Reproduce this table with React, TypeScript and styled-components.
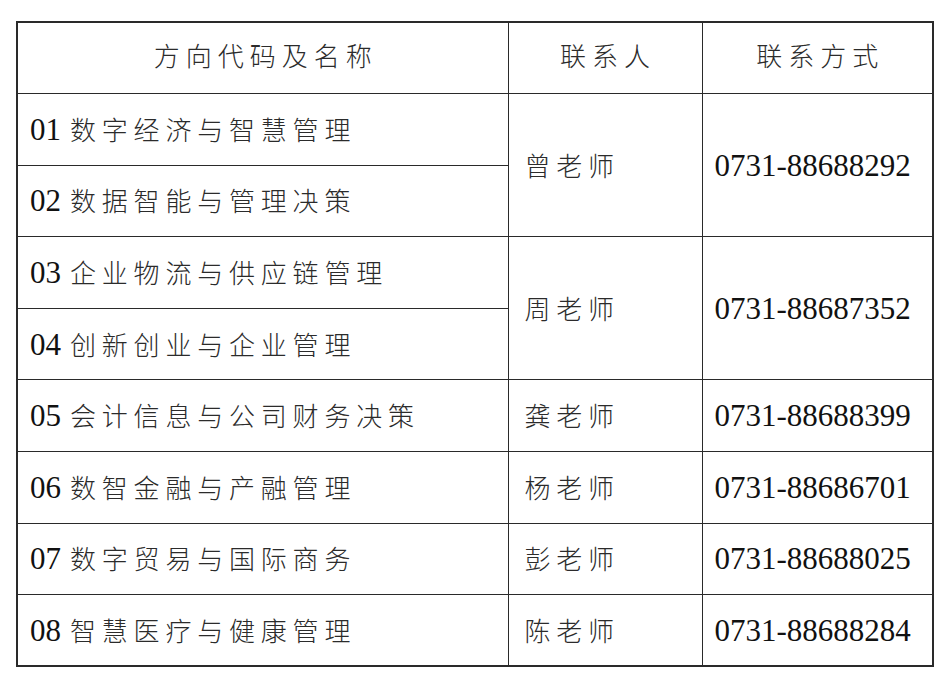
import React from "react";
import styled, { createGlobalStyle } from "styled-components";

const Global = createGlobalStyle`
  html, body { margin: 0; padding: 0; background: #fff; }
  body { font-family: "Liberation Serif", "Noto Sans CJK SC", serif; color: #1e1e1e; }
`;

const Page = styled.div`
  padding: 21px 0 0 16px;
`;

const Table = styled.table`
  border-collapse: collapse;
  table-layout: fixed;
  width: 916px;
  border: 2px solid #2a2a2a;
`;

const Col = styled.col<{ $w: number }>`
  width: ${(p) => p.$w}px;
`;

const Row = styled.tr`
  height: 71.6px;
`;

const HeadCell = styled.th`
  border: 1.5px solid #2a2a2a;
  font-family: "Noto Sans CJK SC", sans-serif;
  font-weight: 300;
  font-size: 26px;
  letter-spacing: 6px;
  text-indent: 6px;
  color: #2b2b2b;
  text-align: center;
  vertical-align: middle;
  padding: 0 0 6px;
  line-height: 1;
`;

const Cell = styled.td<{ $pl?: number }>`
  border: 1.5px solid #2a2a2a;
  padding: 0 0 0 ${(p) => p.$pl ?? 12}px;
  vertical-align: middle;
  white-space: nowrap;
  line-height: 1;
`;

const Code = styled.span`
  font-family: "Liberation Serif", serif;
  font-size: 31px;
  color: #111;
  margin-right: 9px;
`;

const Label = styled.span`
  font-family: "Noto Sans CJK SC", sans-serif;
  font-weight: 300;
  font-size: 26px;
  letter-spacing: 5.8px;
  color: #2b2b2b;
`;

const Phone = styled.span`
  font-family: "Liberation Serif", serif;
  font-size: 31px;
  color: #111;
`;

type Item = { code: string; name: string };
type Group = { person: string; phone: string; items: Item[] };

const groups: Group[] = [
  {
    person: "曾老师",
    phone: "0731-88688292",
    items: [
      { code: "01", name: "数字经济与智慧管理" },
      { code: "02", name: "数据智能与管理决策" },
    ],
  },
  {
    person: "周老师",
    phone: "0731-88687352",
    items: [
      { code: "03", name: "企业物流与供应链管理" },
      { code: "04", name: "创新创业与企业管理" },
    ],
  },
  { person: "龚老师", phone: "0731-88688399", items: [{ code: "05", name: "会计信息与公司财务决策" }] },
  { person: "杨老师", phone: "0731-88686701", items: [{ code: "06", name: "数智金融与产融管理" }] },
  { person: "彭老师", phone: "0731-88688025", items: [{ code: "07", name: "数字贸易与国际商务" }] },
  { person: "陈老师", phone: "0731-88688284", items: [{ code: "08", name: "智慧医疗与健康管理" }] },
];

export default function App() {
  return (
    <>
      <Global />
      <Page>
        <Table>
          <colgroup>
            <Col $w={491} />
            <Col $w={194} />
            <Col $w={231} />
          </colgroup>
          <tbody>
            <Row>
              <HeadCell>方向代码及名称</HeadCell>
              <HeadCell>联系人</HeadCell>
              <HeadCell>联系方式</HeadCell>
            </Row>
            {groups.map((g) =>
              g.items.map((it, i) => (
                <Row key={it.code}>
                  <Cell>
                    <Code>{it.code}</Code>
                    <Label>{it.name}</Label>
                  </Cell>
                  {i === 0 && (
                    <>
                      <Cell rowSpan={g.items.length} $pl={16}>
                        <Label>{g.person}</Label>
                      </Cell>
                      <Cell rowSpan={g.items.length} $pl={12}>
                        <Phone>{g.phone}</Phone>
                      </Cell>
                    </>
                  )}
                </Row>
              ))
            )}
          </tbody>
        </Table>
      </Page>
    </>
  );
}
